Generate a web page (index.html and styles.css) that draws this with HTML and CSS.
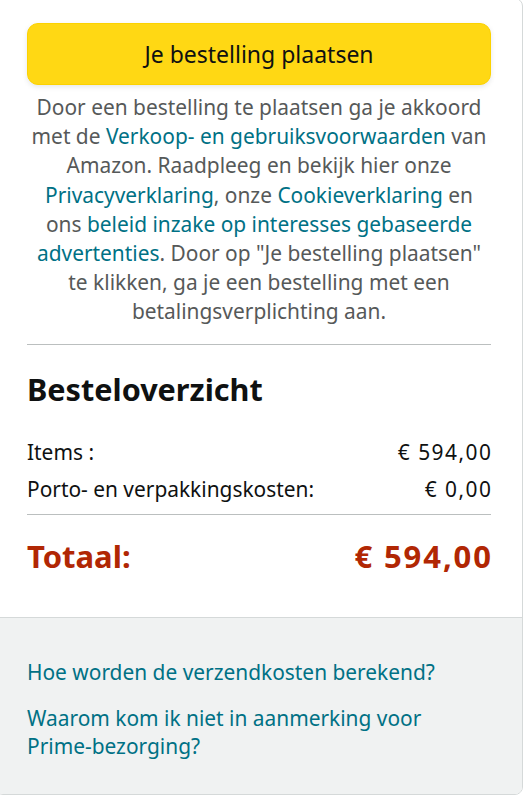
FILE: index.html
```html
<!DOCTYPE html>
<html lang="nl">
<head>
<meta charset="utf-8">
<title>Bestelling plaatsen</title>
<link rel="stylesheet" href="styles.css">
</head>
<body>
<div class="card">
  <div class="main">
    <button class="place-btn" type="button">Je bestelling plaatsen</button>
    <p class="legal">Door een bestelling te plaatsen ga je akkoord<br>met de <a href="#">Verkoop- en gebruiksvoorwaarden</a> van<br>Amazon. Raadpleeg en bekijk hier onze<br><a href="#">Privacyverklaring</a>, onze <a href="#">Cookieverklaring</a> en<br>ons <a href="#">beleid inzake op interesses gebaseerde<br>advertenties</a>. Door op "Je bestelling plaatsen"<br>te klikken, ga je een bestelling met een<br>betalingsverplichting aan.</p>
    <hr class="divider">
    <h2 class="title">Besteloverzicht</h2>
    <div class="rows">
      <div class="row"><span>Items :</span><span class="amount">€ 594,00</span></div>
      <div class="row"><span>Porto- en verpakkingskosten:</span><span class="amount">€ 0,00</span></div>
    </div>
    <hr class="divider thin">
    <div class="total"><span>Totaal:</span><span class="amount big">€ 594,00</span></div>
  </div>
  <div class="footer">
    <a href="#" class="help">Hoe worden de verzendkosten berekend?</a>
    <a href="#" class="help">Waarom kom ik niet in aanmerking voor <span class="nowrap">Prime-bezorging?</span></a>
  </div>
</div>
</body>
</html>
```
FILE: styles.css
```css
html, body {
  margin: 0;
  padding: 0;
  background: #fff;
}
body {
  font-family: "Noto Sans", "DejaVu Sans", sans-serif;
  color: #0F1111;
}
.card {
  box-sizing: border-box;
  width: 528px;
  margin: -2px 0 0 -5px;
  border: 1px solid #D5D9D9;
  border-radius: 8px;
  overflow: hidden;
  background: #fff;
}
.main {
  padding: 24px 31px 43px;
}
.place-btn {
  display: block;
  width: 100%;
  height: 62px;
  box-sizing: border-box;
  background: #FFD814;
  border: 1px solid #FCD200;
  border-radius: 11px;
  box-shadow: 0 2px 5px 0 rgba(213, 217, 217, 0.6);
  font-family: inherit;
  font-size: 23px;
  color: #0F1111;
  padding: 0;
  cursor: pointer;
}
.legal {
  margin: 8px 0 0;
  text-align: center;
  font-size: 20.9px;
  line-height: 29.2px;
  color: #565959;
}
a {
  color: #007185;
  text-decoration: none;
}
.divider {
  border: 0;
  border-top: 1px solid #BBBFBF;
  margin: 17px 0 0;
  height: 0;
}
.divider.thin {
  margin-top: 10px;
}
.title {
  margin: 26px 0 0;
  font-size: 30.6px;
  line-height: 36px;
  font-weight: 700;
}
.rows {
  margin-top: 31px;
  display: flex;
  flex-direction: column;
  gap: 8px;
}
.row {
  display: flex;
  justify-content: space-between;
  font-size: 20.9px;
  line-height: 29.2px;
}
.amount {
  letter-spacing: 1.5px;
  margin-right: -1.5px;
}
.total {
  margin-top: 23px;
  display: flex;
  justify-content: space-between;
  font-size: 31px;
  line-height: 36px;
  font-weight: 700;
  color: #B12704;
}
.amount.big {
  letter-spacing: 1.9px;
  margin-right: -1.9px;
}
.footer {
  background: #F0F2F2;
  border-top: 1px solid #D5D9D9;
  padding: 40px 31px 33px;
  display: flex;
  flex-direction: column;
  gap: 17px;
}
.help {
  font-size: 20.9px;
  line-height: 28.6px;
}
.nowrap {
  white-space: nowrap;
}
```
